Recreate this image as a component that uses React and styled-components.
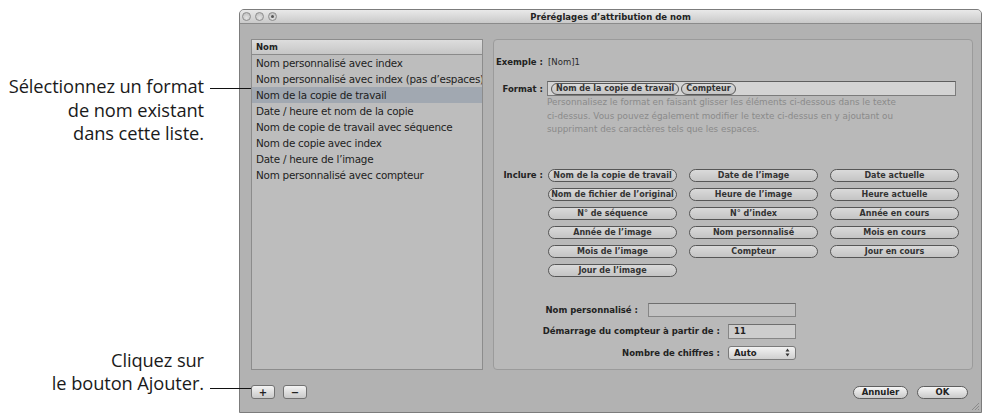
import React from "react";
import styled, { createGlobalStyle } from "styled-components";

const GlobalStyle = createGlobalStyle`
  html, body {
    margin: 0;
    padding: 0;
    background: #ffffff;
  }
  body {
    width: 990px;
    height: 418px;
    overflow: hidden;
    font-family: "DejaVu Sans", "Liberation Sans", sans-serif;
  }
`;

const Page = styled.div`
  display: flex;
  height: 418px;
  padding-top: 9px;
  box-sizing: border-box;
`;

const Notes = styled.div`
  width: 239px;
  flex-shrink: 0;
  display: flex;
  flex-direction: column;
  position: relative;
  z-index: 2;
`;

const Callout = styled.div`
  display: flex;
  justify-content: flex-end;
  margin-top: ${(p) => p.$top}px;
`;

const CalloutText = styled.div`
  font-family: "Open Sans", "Noto Sans", sans-serif;
  font-size: 18.3px;
  line-height: 23.5px;
  color: #1a1a1a;
  text-align: right;
  letter-spacing: -0.1px;
`;

const CalloutLine = styled.div`
  width: 41px;
  height: 1px;
  background: #111;
  margin: ${(p) => p.$offset}px -12px 0 6px;
`;

const Window = styled.div`
  width: 743px;
  height: 404px;
  box-sizing: border-box;
  border: 1px solid #7c7c7c;
  border-radius: 5px 5px 0 0;
  background: #b2b2b2;
  display: flex;
  flex-direction: column;
  position: relative;
`;

const TitleBar = styled.div`
  height: 13px;
  display: grid;
  grid-template-columns: 1fr auto 1fr;
  align-items: center;
  background: linear-gradient(#e9e9e9, #c9c9c9);
  border-bottom: 1px solid #8b8b8b;
  border-radius: 4px 4px 0 0;
`;

const Lights = styled.div`
  display: flex;
  gap: 4px;
  padding-left: 2px;
`;

const Light = styled.span`
  width: 9px;
  height: 9px;
  border-radius: 50%;
  border: 1px solid #8d8d8d;
  background: radial-gradient(circle at 50% 70%, #e4e4e4, #b9b9b9);
  box-sizing: border-box;
  display: flex;
  align-items: center;
  justify-content: center;
  &::after {
    content: "";
    width: 3px;
    height: 3px;
    border-radius: 50%;
    background: ${(p) => (p.$dot ? "#555" : "transparent")};
  }
`;

const Title = styled.div`
  font-size: 8.5px;
  font-weight: bold;
  color: #222;
`;

const Body = styled.div`
  flex: 1;
  display: flex;
  flex-direction: column;
  padding: 15px 8px 13px 11px;
`;

const Panels = styled.div`
  display: flex;
  gap: 10px;
  height: 331px;
`;

const List = styled.div`
  width: 232px;
  box-sizing: border-box;
  border: 1px solid #8c8c8c;
  background: #bdbdbd;
  overflow: hidden;
`;

const ListHeader = styled.div`
  height: 14px;
  line-height: 14px;
  padding-left: 4px;
  font-size: 8.5px;
  font-weight: bold;
  color: #222;
  background: linear-gradient(#dddddd, #c6c6c6);
  border-bottom: 1px solid #8a8a8a;
`;

const Row = styled.div`
  height: 16px;
  line-height: 16px;
  padding-left: 4px;
  font-size: 10.4px;
  letter-spacing: -0.25px;
  color: #1e1e1e;
  white-space: nowrap;
  background: ${(p) => (p.$selected ? "#a1a8b1" : "transparent")};
`;

const Group = styled.div`
  flex: 1;
  box-sizing: border-box;
  border: 1px solid #9b9b9b;
  border-radius: 4px;
  background: #b9b9b9;
  padding-top: 16px;
  display: flex;
  flex-direction: column;
`;

const FieldRow = styled.div`
  display: grid;
  grid-template-columns: 49px 1fr;
  column-gap: ${(p) => p.$gap || 4}px;
  align-items: ${(p) => p.$align || "center"};
  margin-top: ${(p) => p.$top || 0}px;
`;

const Label = styled.div`
  font-size: 8.5px;
  font-weight: bold;
  color: #222;
  text-align: right;
  white-space: nowrap;
  line-height: 12px;
`;

const Value = styled.div`
  font-size: 8.5px;
  color: #2a2a2a;
  line-height: 12px;
`;

const TokenField = styled.div`
  width: 409px;
  height: 15px;
  box-sizing: border-box;
  border: 1px solid #7b7b7b;
  border-top-color: #5e5e5e;
  background: #d3d3d3;
  display: flex;
  align-items: center;
  gap: 2px;
  padding-left: 3px;
`;

const Help = styled.div`
  margin-left: 53px;
  font-size: 8.8px;
  line-height: 13.5px;
  color: #8a8a8a;
  white-space: nowrap;
`;

const PillGrid = styled.div`
  display: grid;
  grid-template-columns: repeat(3, 129px);
  column-gap: 12px;
  row-gap: 6px;
`;

const Pill = styled.div`
  height: ${(p) => (p.$small ? 12 : 13)}px;
  box-sizing: border-box;
  padding: 0 ${(p) => (p.$small ? 4 : 2)}px;
  border: 1px solid #565656;
  border-radius: 7px;
  background: linear-gradient(#dadada, #c4c4c4);
  font-size: 8px;
  font-weight: bold;
  color: #333;
  display: flex;
  align-items: center;
  justify-content: center;
  white-space: nowrap;
`;

const Form = styled.div`
  width: 302px;
  margin-top: 26px;
  display: flex;
  flex-direction: column;
  gap: 7px;
`;

const FormRow = styled.div`
  display: flex;
  justify-content: flex-end;
  align-items: center;
  gap: ${(p) => p.$gap}px;
`;

const Input = styled.div`
  width: ${(p) => p.$w}px;
  height: ${(p) => p.$h || 14}px;
  box-sizing: border-box;
  border: 1px solid #868686;
  border-top-color: #6e6e6e;
  background: ${(p) => (p.$dim ? "#c2c2c2" : "#cdcdcd")};
  font-size: 8.5px;
  font-weight: bold;
  color: #222;
  padding-left: 5px;
  display: flex;
  align-items: center;
`;

const Popup = styled.div`
  width: 68px;
  height: 14px;
  box-sizing: border-box;
  border: 1px solid #7a7a7a;
  border-radius: 3px;
  background: linear-gradient(#f2f2f2, #cfcfcf);
  font-size: 8.5px;
  font-weight: bold;
  color: #222;
  display: flex;
  align-items: center;
  justify-content: space-between;
  padding: 0 5px;
`;

const BottomBar = styled.div`
  margin-top: 15px;
  display: flex;
  align-items: center;
`;

const SquareButton = styled.div`
  width: 24px;
  height: 14px;
  box-sizing: border-box;
  border: 1px solid #727272;
  border-radius: 3px;
  background: linear-gradient(#f4f4f4, #c9c9c9);
  font-size: 10px;
  font-weight: bold;
  color: #222;
  display: flex;
  align-items: center;
  justify-content: center;
  margin-right: 8px;
`;

const Spacer = styled.div`
  flex: 1;
`;

const PushButton = styled.div`
  width: ${(p) => p.$w}px;
  height: 13px;
  box-sizing: border-box;
  border: 1px solid #5e5e5e;
  border-radius: 7px;
  background: linear-gradient(#f6f6f6, #cacaca);
  font-size: 8.5px;
  font-weight: bold;
  color: #222;
  display: flex;
  align-items: center;
  justify-content: center;
  margin-left: 9px;
  &:last-child {
    margin-right: 5px;
  }
`;

const Grip = styled.svg`
  position: absolute;
  right: 1px;
  bottom: 1px;
`;

const rows = [
  "Nom personnalisé avec index",
  "Nom personnalisé avec index (pas d’espaces)",
  "Nom de la copie de travail",
  "Date / heure et nom de la copie",
  "Nom de copie de travail avec séquence",
  "Nom de copie avec index",
  "Date / heure de l’image",
  "Nom personnalisé avec compteur",
];

const pills = [
  "Nom de la copie de travail",
  "Date de l’image",
  "Date actuelle",
  "Nom de fichier de l’original",
  "Heure de l’image",
  "Heure actuelle",
  "N° de séquence",
  "N° d’index",
  "Année en cours",
  "Année de l’image",
  "Nom personnalisé",
  "Mois en cours",
  "Mois de l’image",
  "Compteur",
  "Jour en cours",
  "Jour de l’image",
];

export default function App() {
  return (
    <Page>
      <GlobalStyle />
      <Notes>
        <Callout $top={65}>
          <CalloutText>
            Sélectionnez un format
            <br />
            de nom existant
            <br />
            dans cette liste.
          </CalloutText>
          <CalloutLine $offset={14} />
        </Callout>
        <Callout $top={203}>
          <CalloutText>
            Cliquez sur
            <br />
            le bouton Ajouter.
          </CalloutText>
          <CalloutLine $offset={40} />
        </Callout>
      </Notes>

      <Window>
        <TitleBar>
          <Lights>
            <Light />
            <Light />
            <Light $dot />
          </Lights>
          <Title>Préréglages d’attribution de nom</Title>
          <div />
        </TitleBar>
        <Body>
          <Panels>
            <List>
              <ListHeader>Nom</ListHeader>
              {rows.map((r, i) => (
                <Row key={r} $selected={i === 2}>
                  {r}
                </Row>
              ))}
            </List>
            <Group>
              <FieldRow $gap={5}>
                <Label>Exemple :</Label>
                <Value>[Nom]1</Value>
              </FieldRow>
              <FieldRow $top={13}>
                <Label>Format :</Label>
                <TokenField>
                  <Pill $small>Nom de la copie de travail</Pill>
                  <Pill $small>Compteur</Pill>
                </TokenField>
              </FieldRow>
              <Help>
                Personnalisez le format en faisant glisser les éléments ci-dessous dans le texte
                <br />
                ci-dessus. Vous pouvez également modifier le texte ci-dessus en y ajoutant ou
                <br />
                supprimant des caractères tels que les espaces.
              </Help>
              <FieldRow $top={32} $align="start" $gap={5}>
                <Label>Inclure :</Label>
                <PillGrid>
                  {pills.map((p) => (
                    <Pill key={p}>{p}</Pill>
                  ))}
                </PillGrid>
              </FieldRow>
              <Form>
                <FormRow $gap={10}>
                  <Label>Nom personnalisé :</Label>
                  <Input $w={148} $dim />
                </FormRow>
                <FormRow $gap={8}>
                  <Label>Démarrage du compteur à partir de :</Label>
                  <Input $w={68} $h={15}>
                    11
                  </Input>
                </FormRow>
                <FormRow $gap={8}>
                  <Label>Nombre de chiffres :</Label>
                  <Popup>
                    Auto
                    <svg width="5" height="9" viewBox="0 0 5 9">
                      <path d="M2.5 0.5 L4.5 3.5 L0.5 3.5 Z M2.5 8.5 L4.5 5.5 L0.5 5.5 Z" fill="#333" />
                    </svg>
                  </Popup>
                </FormRow>
              </Form>
            </Group>
          </Panels>
          <BottomBar>
            <SquareButton>+</SquareButton>
            <SquareButton>−</SquareButton>
            <Spacer />
            <PushButton $w={55}>Annuler</PushButton>
            <PushButton $w={51}>OK</PushButton>
          </BottomBar>
        </Body>
        <Grip width="10" height="10" viewBox="0 0 10 10">
          <path d="M9 2 L2 9 M9 5 L5 9 M9 8 L8 9" stroke="#8a8a8a" strokeWidth="1" />
        </Grip>
      </Window>
    </Page>
  );
}
